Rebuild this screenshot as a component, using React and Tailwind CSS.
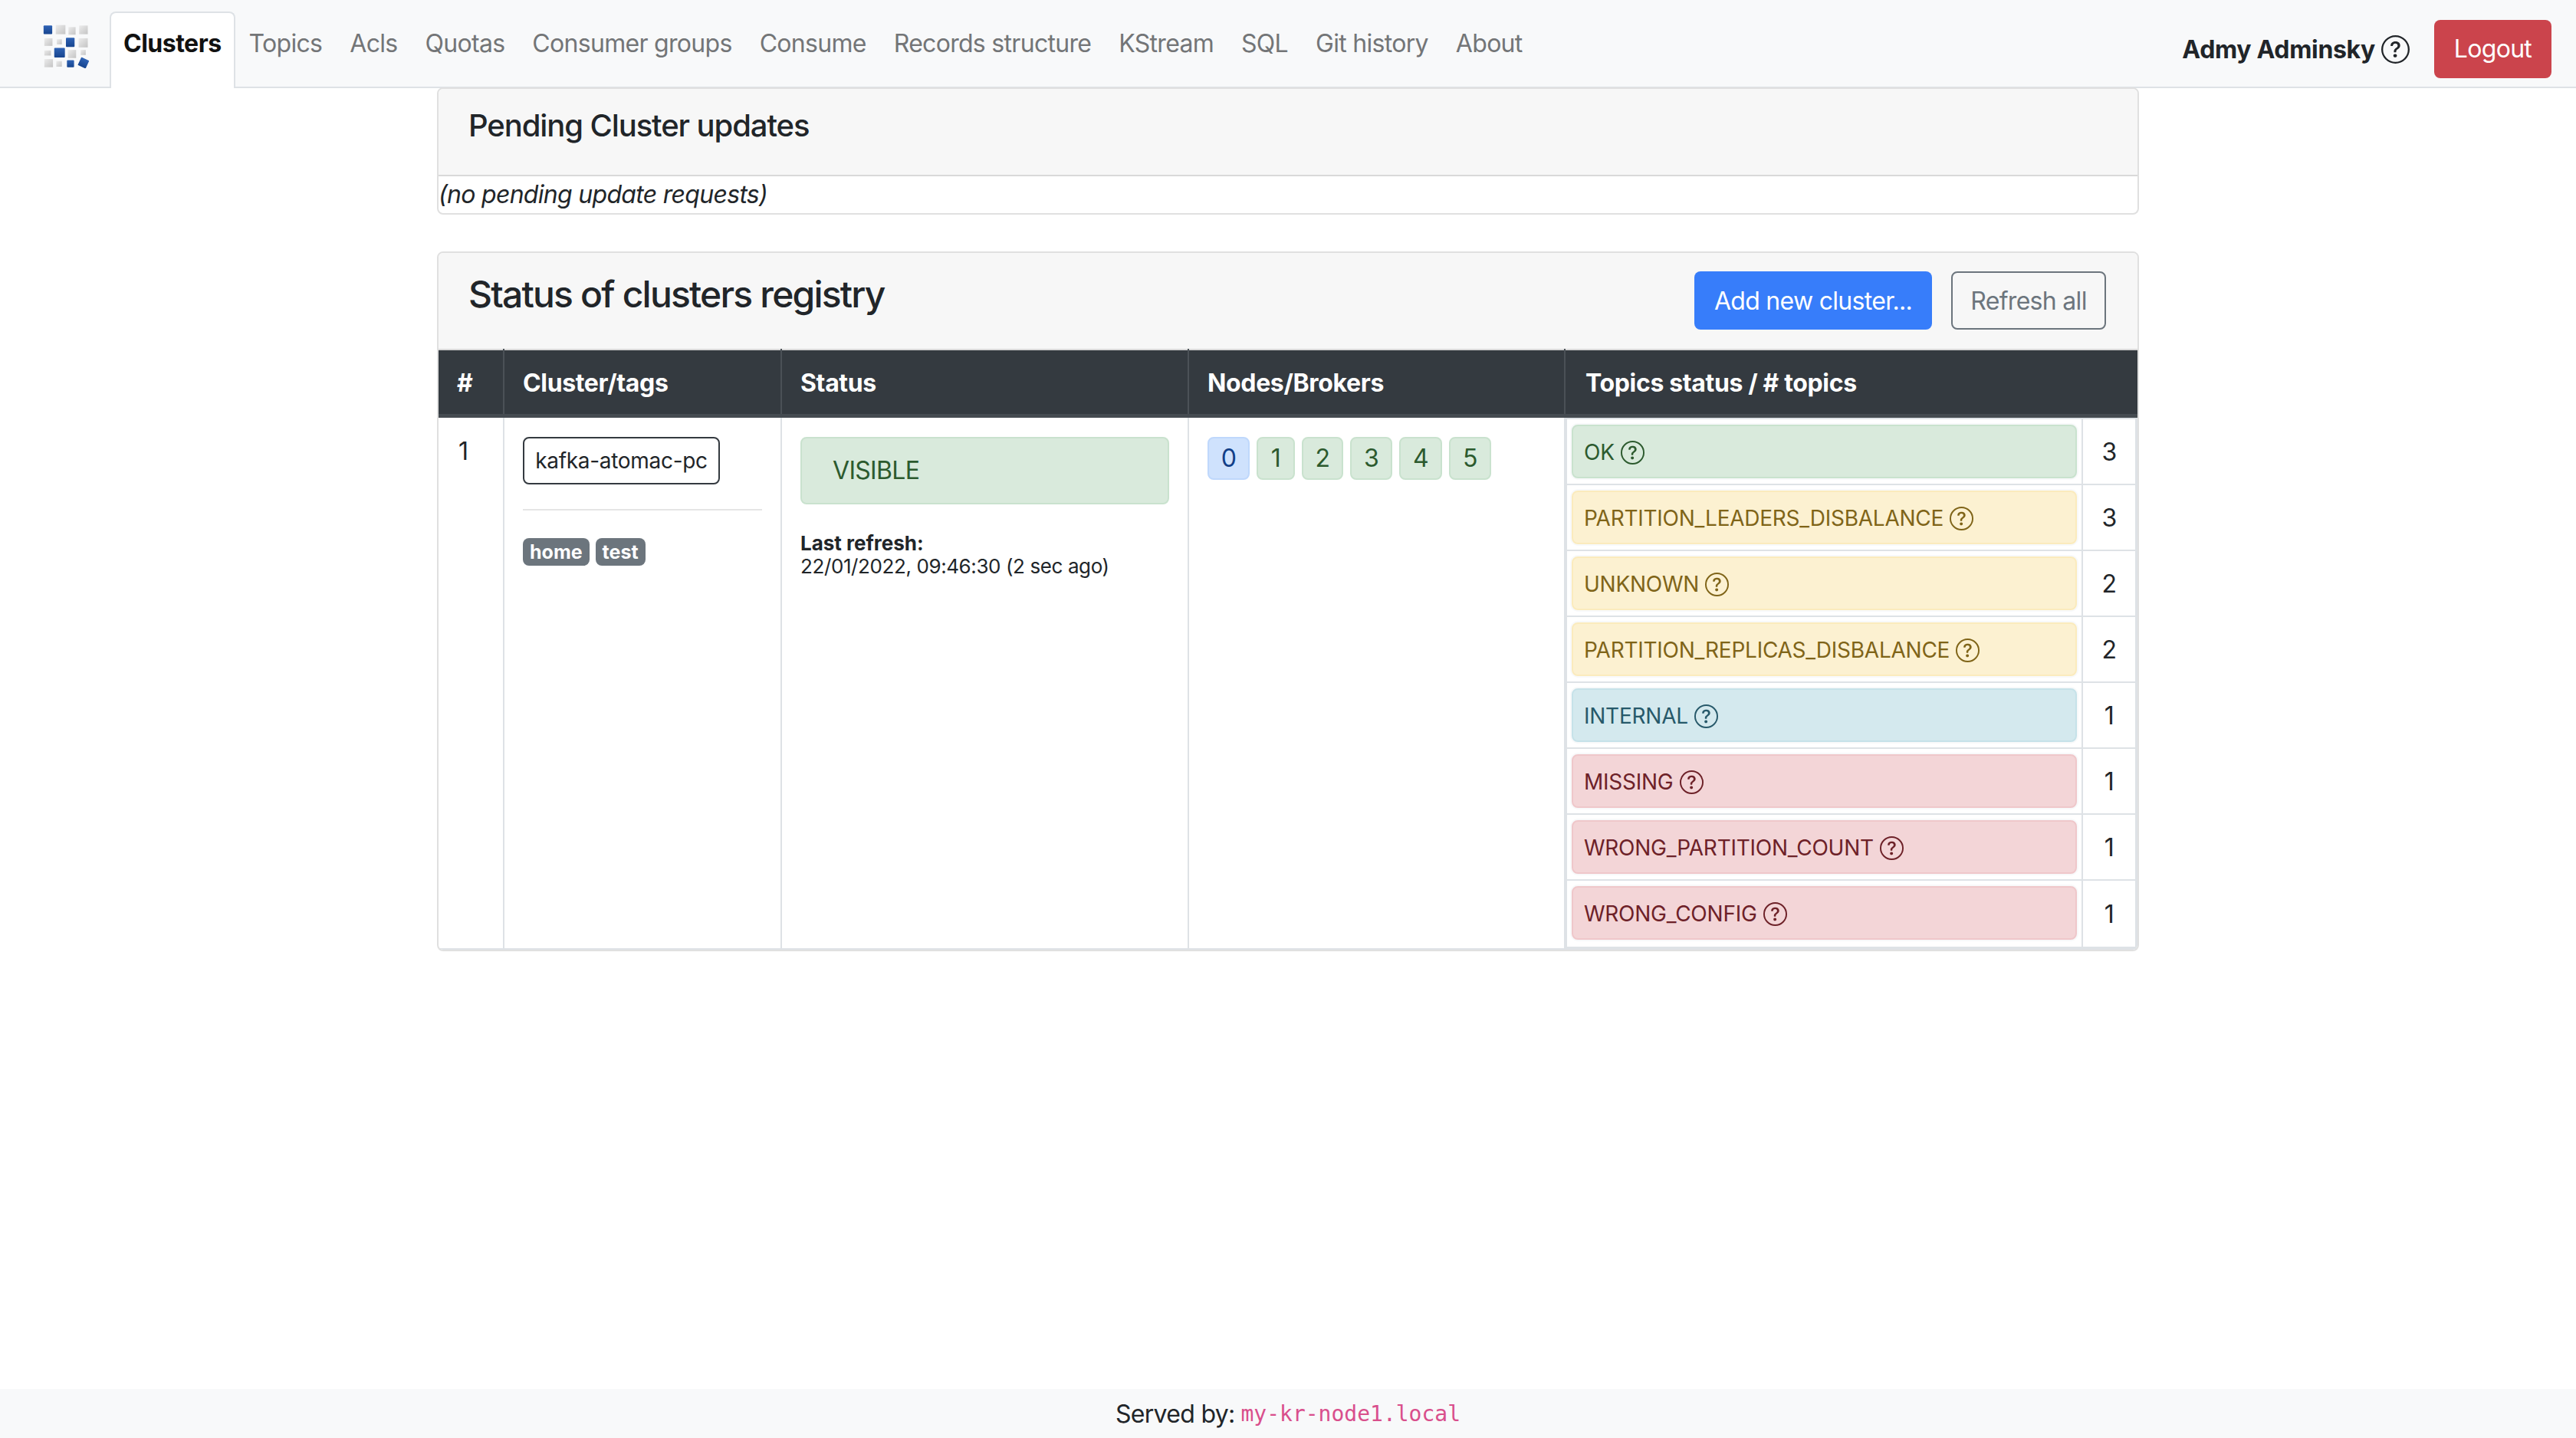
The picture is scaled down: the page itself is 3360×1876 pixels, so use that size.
import React from 'react';
import { BsQuestionCircle } from 'react-icons/bs';

const navItems = ['Topics', 'Acls', 'Quotas', 'Consumer groups', 'Consume', 'Records structure', 'KStream', 'SQL', 'Git history', 'About'];

const green = 'bg-[#d9eadc] border-[#c9e2ce] text-[#2c5a2e]';
const yellow = 'bg-[#fcf1d1] border-[#fbebbd] text-[#7f6418]';
const blue = 'bg-[#d4e9ee] border-[#c6e2e9] text-[#27596a]';
const red = 'bg-[#f3d5d7] border-[#efc7ca] text-[#6d2128]';

const brokers = [
  { id: 0, cls: 'w-[55px] bg-[#cfe2fd] border-[#bfd8fc] text-[#123f88]' },
  { id: 1, cls: `w-[50px] ${green}` },
  { id: 2, cls: `w-[54px] ${green}` },
  { id: 3, cls: `w-[55px] ${green}` },
  { id: 4, cls: `w-[56px] ${green}` },
  { id: 5, cls: `w-[55px] ${green}` },
];

const topicStatuses = [
  { name: 'OK', count: 3, cls: green },
  { name: 'PARTITION_LEADERS_DISBALANCE', count: 3, cls: yellow },
  { name: 'UNKNOWN', count: 2, cls: yellow },
  { name: 'PARTITION_REPLICAS_DISBALANCE', count: 2, cls: yellow },
  { name: 'INTERNAL', count: 1, cls: blue },
  { name: 'MISSING', count: 1, cls: red },
  { name: 'WRONG_PARTITION_COUNT', count: 1, cls: red },
  { name: 'WRONG_CONFIG', count: 1, cls: red },
];

const Logo = () => (
  <svg viewBox="80 64 180 172" className="w-[60px] h-[57px]">
    <defs>
      <linearGradient id="sq" x1="0" y1="0" x2="1" y2="1">
        <stop offset="0" stopColor="#ececec" />
        <stop offset="1" stopColor="#c4c4c4" />
      </linearGradient>
      <linearGradient id="bl" x1="0" y1="0" x2="0" y2="1">
        <stop offset="0" stopColor="#2f63b5" />
        <stop offset="1" stopColor="#17458f" />
      </linearGradient>
    </defs>
    <rect x="82" y="68" width="34" height="34" rx="3" fill="url(#bl)" />
    <rect x="130" y="66" width="38" height="36" fill="url(#sq)" />
    <rect x="180" y="74" width="28" height="30" fill="url(#sq)" />
    <rect x="222" y="68" width="34" height="34" fill="url(#sq)" />
    <rect x="85" y="118" width="32" height="30" fill="url(#sq)" />
    <rect x="134" y="122" width="20" height="20" fill="url(#sq)" />
    <rect x="170" y="116" width="34" height="36" rx="3" fill="url(#bl)" />
    <rect x="220" y="118" width="36" height="36" fill="url(#sq)" />
    <rect x="85" y="166" width="26" height="20" fill="url(#sq)" />
    <rect x="124" y="156" width="42" height="38" rx="3" fill="url(#bl)" />
    <rect x="178" y="164" width="32" height="32" fill="url(#sq)" />
    <rect x="228" y="164" width="20" height="20" fill="url(#sq)" />
    <rect x="85" y="200" width="34" height="32" fill="url(#sq)" />
    <rect x="132" y="208" width="22" height="22" fill="url(#sq)" />
    <rect x="174" y="204" width="28" height="28" rx="3" fill="url(#bl)" />
    <rect x="222" y="198" width="34" height="34" rx="2" fill="url(#bl)" transform="rotate(25 239 215)" />
  </svg>
);

const Navbar = () => (
  <nav className="h-[115px] bg-[#f8f9fa] border-b-2 border-[#dee2e6] flex items-end pl-[56px] pr-[32px]">
    <div className="w-[87px] self-start pt-[32px]">
      <Logo />
    </div>
    <a className="h-[100px] -mb-[2px] px-[16px] pb-[18px] flex items-center bg-white border-2 border-b-0 border-[#dee2e6] rounded-t-[8px] font-bold text-[#111] tracking-[-0.5px]">
      Clusters
    </a>
    <div className="flex self-start pt-[33px]">
      {navItems.map((item) => (
        <a key={item} className="px-[18px] leading-[48px] text-[#737577] whitespace-nowrap">
          {item}
        </a>
      ))}
    </div>
    <div className="ml-auto self-start pt-[26px] flex items-center">
      <span className="font-bold text-[#212529] mr-[8px] tracking-[-0.33px] pt-[2px]">Admy Adminsky</span>
      <BsQuestionCircle className="w-[37px] h-[37px] text-[#212529] mr-[32px]" />
      <button className="w-[153px] h-[76px] bg-[#cb444c] text-white rounded-[8px]">Logout</button>
    </div>
  </nav>
);

const PendingCard = () => (
  <section className="-mt-[1px] border-2 border-[#e0e0e0] rounded-[8px] overflow-hidden">
    <div className="h-[114px] bg-[#f7f7f7] border-b-2 border-[#d9d9d9] pl-[39px] pt-[24px]">
      <h5 className="text-[40px] leading-[48px] font-medium text-[#212529] tracking-[-1.1px]">Pending Cluster updates</h5>
    </div>
    <div className="italic leading-[48px] text-[#212529]">(no pending update requests)</div>
  </section>
);

const HeadCell = ({ children }) => (
  <th className="h-[86px] pt-[4px] border-r-2 border-[#4b5157] px-[24px] text-left font-bold text-white tracking-[-0.35px]">{children}</th>
);

const TopicRow = ({ t, last }) => (
  <div className={`flex ${last ? 'h-[86px]' : 'h-[86px] border-b-2 border-[#dee2e6]'}`}>
    <div className="w-[673px] pl-[6px] pr-[6px] pt-[7px] border-r-2 border-[#dee2e6]">
      <div className={`h-[70px] border-2 rounded-[8px] pl-[14px] pt-[3px] flex items-center gap-[8px] text-[28px] tracking-[-0.25px] ring-2 ring-[#f8f9fa] ${t.cls}`}>
        <span>{t.name}</span>
        <BsQuestionCircle className="w-[31px] h-[31px]" />
      </div>
    </div>
    <div className="flex-1 flex items-center justify-center pt-[2px] text-[#212529]">{t.count}</div>
  </div>
);

const RegistryCard = () => (
  <section className="mt-[48px] border-2 border-[#e0e0e0] rounded-[8px] overflow-hidden">
    <div className="h-[125px] bg-[#f7f7f7] pl-[39px] pr-[41px] pt-[24px] flex justify-between">
      <h4 className="mt-[2px] text-[48px] leading-[56px] font-medium text-[#212529] tracking-[-1.8px]">Status of clusters registry</h4>
      <div className="flex gap-[25px]">
        <button className="w-[310px] h-[76px] pt-[2px] bg-[#377dfa] text-white rounded-[8px]">Add new cluster...</button>
        <button className="w-[202px] h-[76px] pt-[2px] border-2 border-[#6c757d] text-[#6c757d] rounded-[8px]">Refresh all</button>
      </div>
    </div>
    <table className="w-full table-fixed border-collapse">
      <colgroup>
        <col className="w-[85px]" />
        <col className="w-[362px]" />
        <col className="w-[531px]" />
        <col className="w-[491px]" />
        <col />
      </colgroup>
      <thead>
        <tr className="bg-[#343a40] border-t-2 border-[#d9d9d9] border-b-[5px] border-b-[#454b51]">
          <HeadCell>#</HeadCell>
          <HeadCell>Cluster/tags</HeadCell>
          <HeadCell>Status</HeadCell>
          <HeadCell>Nodes/Brokers</HeadCell>
          <th className="pt-[4px] px-[26px] text-left font-bold text-white tracking-[-0.35px]">Topics status / # topics</th>
        </tr>
      </thead>
      <tbody>
        <tr className="align-top border-b-2 border-[#dee2e6]">
          <td className="border-r-2 border-[#dee2e6] pl-[26px] pt-[20px] text-[#212529]">1</td>
          <td className="border-r-2 border-[#dee2e6] pl-[24px] pr-[24px] pt-[25px]">
            <button className="w-[257px] h-[62px] border-2 border-[#343a40] rounded-[8px] text-[28px] tracking-[-0.3px] text-[#212529]">kafka-atomac-pc</button>
            <hr className="mt-[32px] border-t-2 border-[#e5e5e5]" />
            <div className="mt-[36px] flex gap-[8px]">
              <span className="h-[36px] px-[9px] rounded-[8px] bg-[#6c757d] text-white text-[25px] tracking-normal leading-[37px] font-bold">home</span>
              <span className="h-[36px] px-[9px] rounded-[8px] bg-[#6c757d] text-white text-[25px] tracking-normal leading-[37px] font-bold">test</span>
            </div>
          </td>
          <td className="border-r-2 border-[#dee2e6] pl-[24px] pr-[24px] pt-[25px]">
            <div className={`h-[88px] border-2 rounded-[8px] pl-[40px] pt-[1px] flex items-center ${green}`}>VISIBLE</div>
            <div className="mt-[36px] text-[26px] leading-[30px] text-[#212529]">
              <div className="font-bold tracking-normal">Last refresh:</div>
              <div className="tracking-[-0.4px]">22/01/2022, 09:46:30 (2 sec ago)</div>
            </div>
          </td>
          <td className="border-r-2 border-[#dee2e6] pl-[24px] pt-[25px]">
            <div className="flex gap-[9px]">
              {brokers.map((b) => (
                <span key={b.id} className={`h-[56px] border-2 rounded-[8px] flex items-center justify-center ${b.cls}`}>
                  {b.id}
                </span>
              ))}
            </div>
          </td>
          <td className="p-0">
            <div className="border-l-2 border-r-[3px] border-t-2 border-b-2 border-[#dee2e6]">
              {topicStatuses.map((t, i) => (
                <TopicRow key={t.name} t={t} last={i === topicStatuses.length - 1} />
              ))}
            </div>
          </td>
        </tr>
      </tbody>
    </table>
  </section>
);

export default function App() {
  return (
    <div className="min-h-screen flex flex-col bg-white text-[32px] tracking-[-0.7px] font-['Inter',sans-serif]">
      <Navbar />
      <main className="w-[2220px] mx-auto">
        <PendingCard />
        <RegistryCard />
      </main>
      <footer className="mt-auto h-[64px] pt-[2px] bg-[#f8f9fa] flex items-center justify-center gap-[8px] text-[#212529]">
        <span>Served by:</span>
        <code className="text-[28px] tracking-normal text-[#d94f8c] font-['DejaVu_Sans_Mono',monospace]">my-kr-node1.local</code>
      </footer>
    </div>
  );
}
